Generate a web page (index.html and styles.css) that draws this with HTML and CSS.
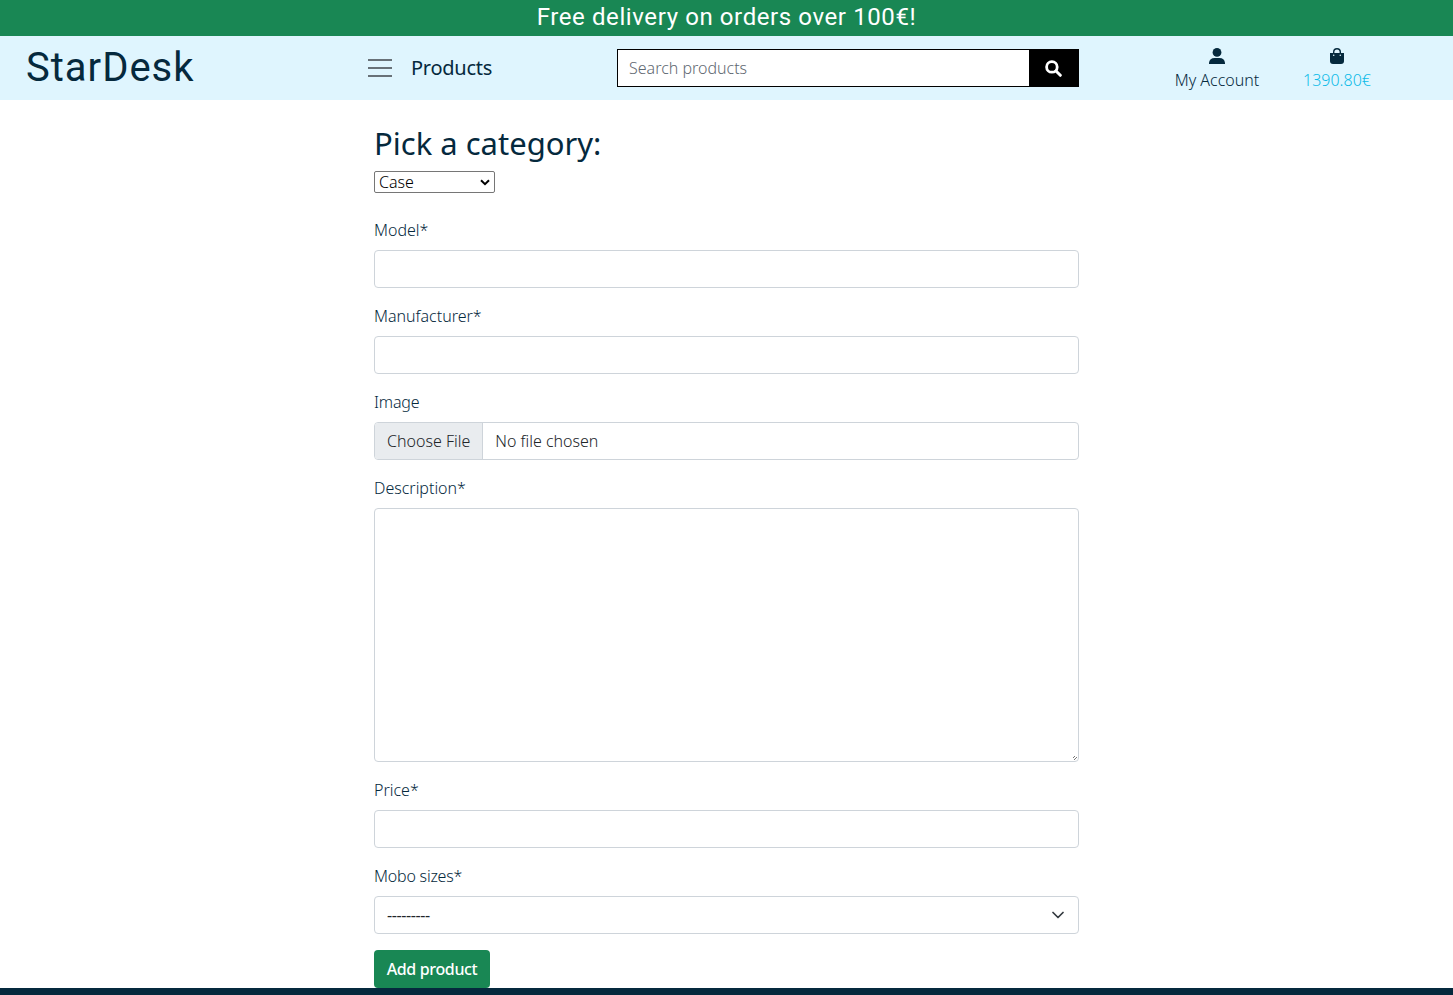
FILE: index.html
```html
<!DOCTYPE html>
<html lang="en">
<head>
<meta charset="utf-8">
<title>StarDesk</title>
<link rel="stylesheet" href="styles.css">
</head>
<body>
<div class="banner"><span>Free delivery on orders over 100€!</span></div>
<header class="header">
  <a class="brand">StarDesk</a>
  <div class="products">
    <svg class="burger" viewBox="0 0 24 20"><path d="M0 2h24M0 10h24M0 18h24" stroke="#687178" stroke-width="2"/></svg>
    <span class="products-label">Products</span>
  </div>
  <form class="search">
    <input class="search-input" type="text" placeholder="Search products">
    <button class="search-btn" type="button" aria-label="Search">
      <svg width="17" height="17" viewBox="0 0 17 17"><circle cx="6.900" cy="6.900" r="5.300" fill="none" stroke="#fff" stroke-width="2.800"/><path d="M11 11l4.300 4.300" stroke="#fff" stroke-width="3" stroke-linecap="round"/></svg>
    </button>
  </form>
  <a class="link account">
    <svg width="16" height="16" viewBox="0 0 16 16"><circle cx="8" cy="4.400" r="4.400" fill="#05293d"/><path d="M0 16v-1.200Q.6 10 5.600 10h4.800Q15.400 10 16 14.800V16z" fill="#05293d"/></svg>
    <span class="account-label">My Account</span>
  </a>
  <a class="link cart">
    <svg width="16" height="16" viewBox="0 0 16 16"><path d="M4.700 6V4a3.300 3.300 0 0 1 6.600 0v2" fill="none" stroke="#05293d" stroke-width="1.400"/><path d="M1 5h14v8a3 3 0 0 1-3 3H4a3 3 0 0 1-3-3z" fill="#05293d"/><circle cx="4.700" cy="7.300" r=".8" fill="#dff5fe"/><circle cx="11.300" cy="7.300" r=".8" fill="#dff5fe"/></svg>
    <span class="cart-label">1390.80€</span>
  </a>
</header>
<main class="main">
  <h2 class="title">Pick a category:</h2>
  <div class="category" role="combobox">
    <span>Case</span>
    <svg width="10" height="7" viewBox="0 0 10 7"><path d="M1 1.200l4 4 4-4" fill="none" stroke="#000" stroke-width="2"/></svg>
  </div>
  <form class="form">
    <div class="field"><label class="label">Model*</label><input class="control" type="text"></div>
    <div class="field"><label class="label">Manufacturer*</label><input class="control" type="text"></div>
    <div class="field"><label class="label tight">Image</label><input class="control file" type="file"></div>
    <div class="field"><label class="label">Description*</label><textarea class="control area"></textarea></div>
    <div class="field"><label class="label">Price*</label><input class="control" type="text"></div>
    <div class="field"><label class="label tight">Mobo sizes*</label>
      <div class="control picker"><span class="dashes">---------</span><svg width="12" height="8" viewBox="0 0 12 8"><path d="M1 1.500l5 5 5-5" fill="none" stroke="#343a40" stroke-width="1.700" stroke-linecap="round" stroke-linejoin="round"/></svg></div>
    </div>
    <button class="submit" type="button">Add product</button>
  </form>
</main>
<footer class="footer"></footer>
</body>
</html>
```
FILE: styles.css
```css
* { box-sizing: border-box; }
body {
  margin: 0;
  height: 995px;
  overflow: hidden;
  display: flex;
  flex-direction: column;
  background: #fff;
  color: #05293d;
  font: 300 16px/24px "Noto Sans", sans-serif;
}
.banner {
  height: 36px;
  flex: none;
  background: #198754;
  color: #fff;
  font: 400 24px/34px Roboto, sans-serif;
  letter-spacing: 0.6px;
  text-align: center;
}
.header {
  height: 64px;
  flex: none;
  display: grid;
  grid-template-columns: 342px 249px 462px 78px 120px 120px;
  align-items: center;
  padding-left: 26px;
  background: #dff5fe;
}
.brand { font: 400 40px/60px Roboto, sans-serif; letter-spacing: 1px; }
.products { display: flex; align-items: center; gap: 19px; font-size: 20px; font-weight: 400; }
.products-label { letter-spacing: -0.25px; }
.burger { width: 24px; height: 20px; }
.search { display: flex; height: 38px; margin: 0; }
.search-input {
  flex: 1;
  min-width: 0;
  padding: 0 11px;
  border: 1px solid #000;
  border-right: 0;
  border-radius: 0;
  font: inherit;
}
.search-input::placeholder { color: #5f6972; opacity: 1; }
.search-btn {
  width: 50px;
  padding: 0 2px 0 0;
  border: 0;
  background: #000;
  display: flex;
  align-items: center;
  justify-content: center;
}
.link {
  display: flex;
  flex-direction: column;
  align-items: center;
  gap: 4px;
  padding-top: 4px;
  white-space: nowrap;
}
.account { grid-column: 5; }
.cart { color: #0dbbe8; }
.main { width: 705px; flex: none; height: 888px; margin-left: 374px; padding-top: 24px; }
.title { margin: 0 0 8px; font-size: 31px; font-weight: 400; line-height: 39px; }
.category {
  display: flex;
  align-items: center;
  justify-content: space-between;
  width: 121px;
  height: 22px;
  padding: 0 4px;
  border: 1px solid #767676;
  border-radius: 2px;
  background: #fff;
  color: #000;
  line-height: 20px;
}
.form { margin: 25px 0 0; }
.field { margin-bottom: 16px; }
.label { display: block; width: max-content; margin-bottom: 8px; }
.tight { letter-spacing: -0.2px; }
.control {
  display: block;
  width: 100%;
  height: 38px;
  padding: 6px 12px;
  border: 1px solid #ced4da;
  border-radius: 4px;
  background: #fff;
  color: #212529;
  font: inherit;
}
.file { overflow: hidden; }
.file::file-selector-button {
  height: 38px;
  margin: -7px 12px -7px -12px;
  padding: 6px 12px;
  border: 0 solid #ced4da;
  border-right-width: 1px;
  background: #e9ecef;
  color: #212529;
  font: inherit;
}
.area { height: 254px; resize: vertical; }
.area::-webkit-resizer {
  background: repeating-linear-gradient(135deg, transparent 0 1px, #777 1px 2px) right 1px bottom 1px / 4px 4px no-repeat;
  clip-path: polygon(100% 0, 100% 100%, 0 100%);
}
.picker { display: flex; align-items: center; justify-content: space-between; padding-right: 14px; }
.dashes { letter-spacing: -0.4px; font-weight: 400; }
.submit {
  display: block;
  width: 116px;
  height: 38px;
  padding: 0;
  border: 0;
  border-radius: 4px;
  background: #198754;
  color: #fff;
  font: 500 16px/24px "Noto Sans", sans-serif;
  letter-spacing: -0.35px;
}
.footer { flex: 1; background: #05293d; }
```
